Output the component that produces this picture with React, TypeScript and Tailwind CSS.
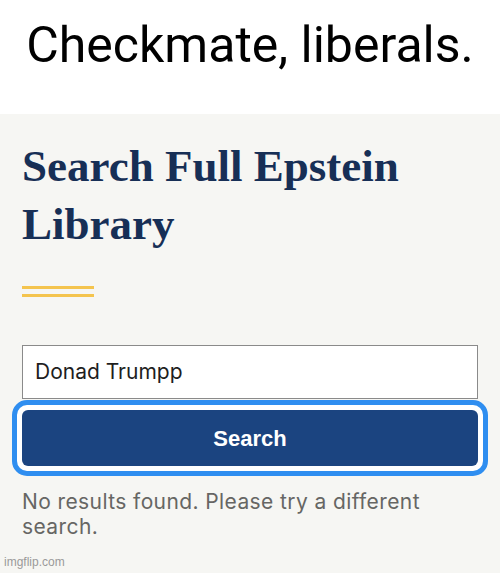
export default function App() {
  return (
    <div className="relative h-[573px] w-[500px] overflow-hidden bg-[#f6f6f3]">
      {/* caption strip */}
      <div className="flex h-[114px] items-start justify-center bg-white pt-[15px]">
        <h1 className="font-['Roboto',sans-serif] text-[50px] leading-[60px] text-black">
          Checkmate, liberals.
        </h1>
      </div>

      <div className="px-[22px] pt-[23px]">
        <h2 className="font-['Liberation_Serif',serif] text-[45px] font-bold leading-[58px] text-[#172f56]">
          Search Full Epstein
          <br />
          Library
        </h2>

        {/* double accent rule */}
        <div className="mt-[33px] flex w-[72px] flex-col gap-[5px]">
          <div className="h-[3px] bg-[#f4c44e]" />
          <div className="h-[3px] bg-[#f4c44e]" />
        </div>

        <div className="mt-[48px] flex h-[54px] items-center border border-[#8a8a8a] bg-white px-[12px]">
          <span className="font-['Inter',sans-serif] text-[21px] text-[#1e1e1e]">Donad Trumpp</span>
        </div>

        <div className="-mx-[10px] mt-[1px] rounded-[15px] border-[5px] border-[#2f8ef0] bg-white p-[5px]">
          <button className="flex h-[56px] w-full items-center justify-center rounded-[6px] bg-[#1b4480] font-['Liberation_Sans',sans-serif] text-[22px] font-bold text-white">
            Search
          </button>
        </div>

        <p className="mt-[13px] w-[440px] font-['Inter',sans-serif] text-[21px] leading-[25px] tracking-[0.4px] text-[#666664]">
          No results found. Please try a different search.
        </p>
      </div>

      <span className="absolute bottom-[2px] left-[4px] font-['Liberation_Sans',sans-serif] text-[12px] text-[#9a9a9a]">
        imgflip.com
      </span>
    </div>
  );
}
